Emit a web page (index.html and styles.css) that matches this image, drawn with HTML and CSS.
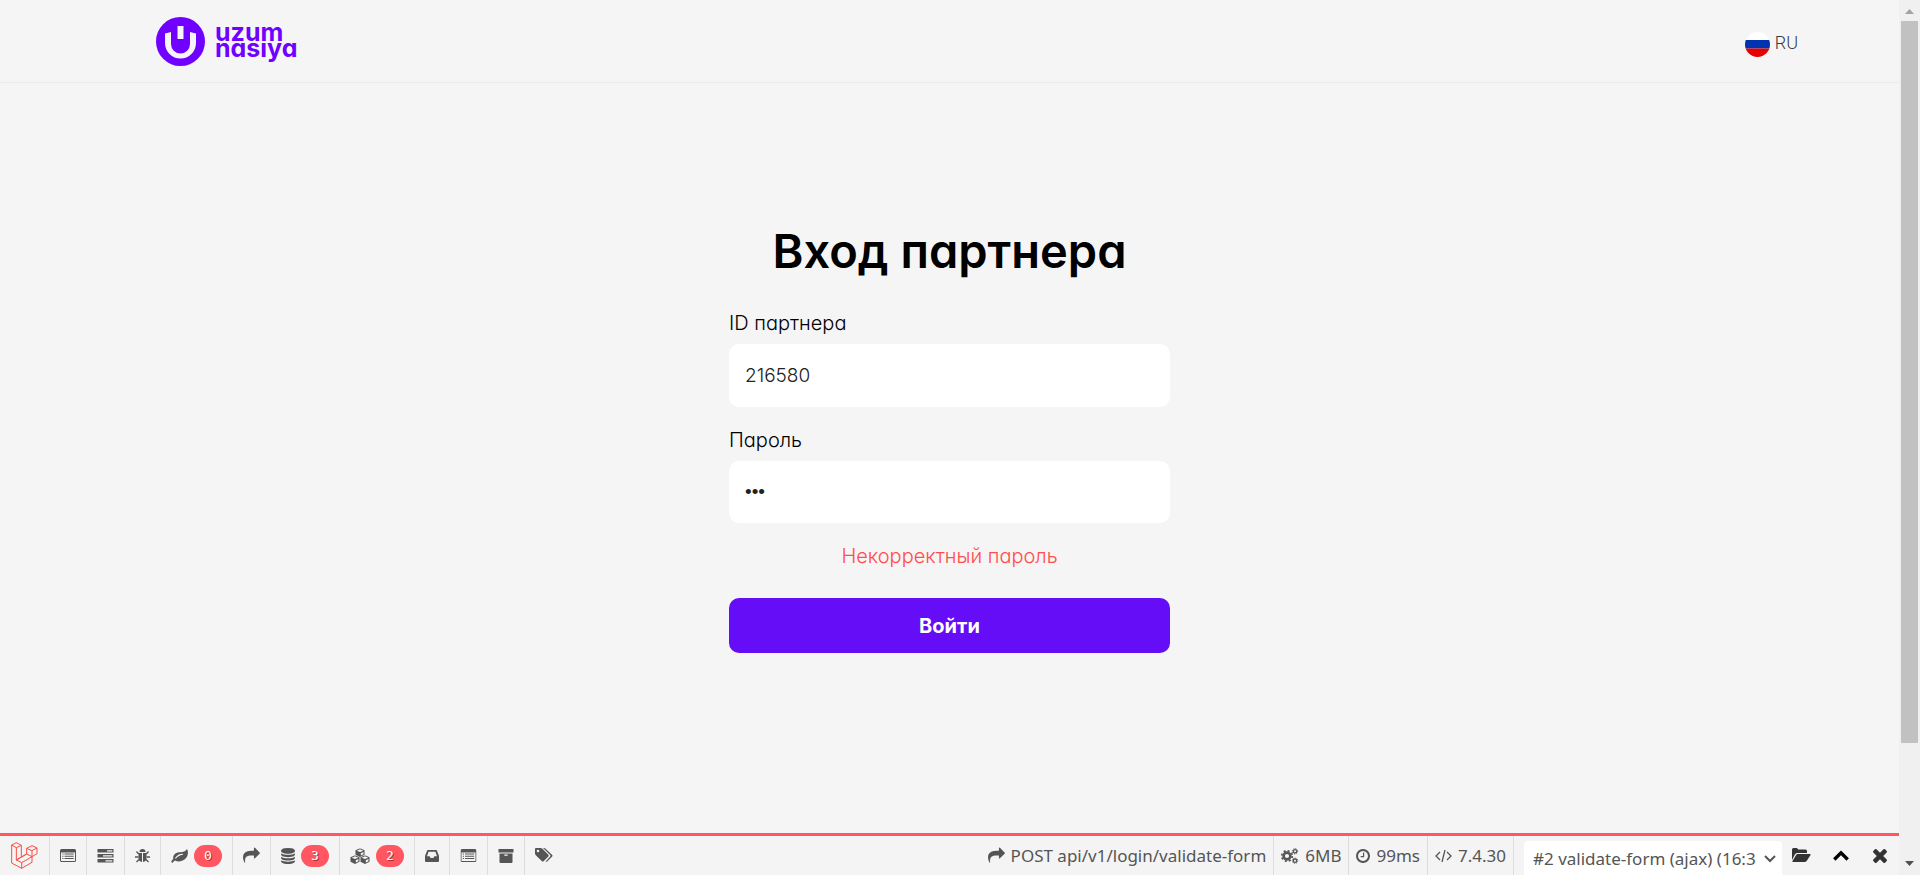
FILE: index.html
```html
<!DOCTYPE html>
<html lang="ru">
<head>
<meta charset="utf-8">
<meta name="viewport" content="width=device-width, initial-scale=1">
<title>Вход партнера</title>
<link rel="stylesheet" href="styles.css">
</head>
<body>
<svg class="sprite" aria-hidden="true">
  <symbol id="share" viewBox="0 0 1792 1792"><path d="M1792 640q0 26-19 45l-512 512q-19 19-45 19t-45-19-19-45V896H928q-98 0-175.500 6t-154 21.500-133 42.500-105.500 69.500-80 101-48.500 138.500-17.500 181q0 55 5 123 0 6 2.500 23.500t2.500 26.500q0 15-8.500 25t-23.500 10q-16 0-28-17-7-9-13-22t-13.500-30-10.500-24Q0 1286 0 1120q0-199 53-333 162-403 875-403h224V128q0-26 19-45t45-19 45 19l512 512q19 19 19 45z"/></symbol>
  <symbol id="list" viewBox="0 0 16 14"><path fill-rule="evenodd" d="M1.500 0h13A1.500 1.500 0 0 1 16 1.500v10a1.500 1.500 0 0 1-1.500 1.500h-13A1.500 1.500 0 0 1 0 11.500v-10A1.500 1.500 0 0 1 1.500 0zM1 3.500v8q0 .5.5.5h13q.5 0 .5-.5v-8zM2.300 4.500h1.200v1H2.300zm2.200 0h9.200v1H4.500zM2.300 6.700h1.200v1H2.300zm2.200 0h9.200v1H4.500zM2.300 9h1.200v1H2.300zm2.200 0h9.200v1H4.500z"/></symbol>
</svg>
<div class="page">
  <header class="header">
    <a class="brand" href="#" aria-label="uzum nasiya">
      <svg class="brand-mark" viewBox="0 0 49 49" aria-hidden="true"><circle cx="24.500" cy="24.500" r="24.500" fill="#7000ff"/><path fill="#f5f5f5" d="M21.500 9h6v13h-6zM9 16.500l6-1.500v12a9.500 9.500 0 0 0 19 0V15l6 1.500V26a15.500 15.500 0 0 1-31 0z"/></svg>
      <span class="brand-name">uzum<br>nasıya</span>
    </a>
    <button class="lang" type="button">
      <svg class="flag" viewBox="0 0 25 25" aria-hidden="true"><clipPath id="disc"><circle cx="12.500" cy="12.500" r="12.500"/></clipPath><g clip-path="url(#disc)"><path fill="#fff" d="M0 0h25v8H0z"/><path fill="#0033b0" d="M0 8h25v8.500H0z"/><path fill="#e80000" d="M0 16.500h25V25H0z"/></g></svg>
      <span>RU</span>
    </button>
  </header>
  <main class="main">
    <form class="login">
      <h1 class="title">Вход партнера</h1>
      <label class="label" for="pid">ID партнера</label>
      <input class="input" id="pid" type="text" value="216580">
      <label class="label" for="pass">Пароль</label>
      <input class="input input-secret" id="pass" type="password" value="123">
      <p class="error">Некорректный пароль</p>
      <button class="submit" type="button">Войти</button>
    </form>
  </main>
  <footer class="debugbar">
    <nav class="tabs">
      <a class="tab tab-logo" href="#" aria-label="Laravel"><svg width="27" height="27" viewBox="32 52 81 81" fill="none" stroke="#ff4a42" stroke-width="3" stroke-linejoin="round"><path d="M34 61l14-7 15 8v35l-15 9V69L34 61v54l30 16 31-18V96l15-9V70l-15-7-16 8v17l-31 18 16 8v17M48 69l15-7M64 114l31-18-16-8M79 71l16 7 15-8M95 78v18M63 97l16-9"/></svg></a>
      <a class="tab" href="#" aria-label="Messages"><svg width="16" height="14"><use href="#list"/></svg></a>
      <a class="tab" href="#" aria-label="Timeline"><svg width="17" height="14" viewBox="0 0 17 14"><path fill-rule="evenodd" d="M.5 0h16v3.600H.5zm9.500 1.200v1.200h5.300V1.200zM.5 5h16v3.600H.5zm5.500 1.200v1.200h9.300V6.200zM.5 10h16v3.600H.5zm8 1.200v1.200h6.800v-1.200z"/></svg></a>
      <a class="tab" href="#" aria-label="Exceptions"><svg width="15" height="16" viewBox="0 0 15 16"><path d="M4.500 4a3 3 0 0 1 6 0zM3.500 5H7v9Q3.500 13.500 3.500 10zM8 5h3.500v5Q11.500 13.500 8 14z"/><path d="M3.700 6L1.500 3.500M3.500 9H0M4 11.500L1.500 14M11.300 6l2.200-2.500M11.500 9H15M11 11.500l2.500 2.500" fill="none" stroke="#555" stroke-width="1.300"/></svg></a>
      <a class="tab" href="#" aria-label="Views"><svg width="17" height="14" viewBox="0 0 17 14"><path fill-rule="evenodd" d="M16 0q1 1.500 1 4-.5 6-6.500 8-3.500 1-6.500-.5-1.500.7-2 2Q1 14 .3 13q-.3-1 1.900-3Q1.500 5 6.500 3.500q2-.5 5-.5Q14.500 2.800 16 0zM12 4.700Q7 4.500 4 9l.8.700Q8 6 12 5.700z"/></svg><span class="badge">0</span></a>
      <a class="tab" href="#" aria-label="Route"><svg width="17" height="17"><use href="#share"/></svg></a>
      <a class="tab" href="#" aria-label="Queries"><svg width="14" height="16" viewBox="128 0 1536 1792"><path d="M896 768q237 0 443-43t325-127v170q0 69-103 128t-280 93.500-385 34.500-385-34.500T231 896 128 768V598q119 84 325 127t443 43zm0 768q237 0 443-43t325-127v170q0 69-103 128t-280 93.500-385 34.500-385-34.500-280-93.500-103-128v-170q119 84 325 127t443 43zm0-384q237 0 443-43t325-127v170q0 69-103 128t-280 93.500-385 34.500-385-34.500-280-93.500-103-128V982q119 84 325 127t443 43zM896 0q208 0 385 34.500t280 93.500 103 128v128q0 69-103 128t-280 93.500T896 640t-385-34.500T231 512 128 384V256q0-69 103-128t280-93.500T896 0z"/></svg><span class="badge">3</span></a>
      <a class="tab" href="#" aria-label="Models"><svg width="20" height="16" viewBox="0 0 20 16"><g id="cube"><path d="M5.500 2.200l3.300-1.500q1.200-.6 2.400 0l3.300 1.500v4.600L10 9 5.500 6.800z"/><path fill="#f4f4f4" d="M6.700 2.700L10 1.300l3.300 1.400L10 4.100zM10.800 5.200l2.600-1.100v2.200l-2.600 1.200z"/></g><use href="#cube" x="-5" y="7"/><use href="#cube" x="5" y="7"/></svg><span class="badge">2</span></a>
      <a class="tab" href="#" aria-label="Mails"><svg width="14" height="12" viewBox="0 0 14 12"><path fill-rule="evenodd" d="M3 0h8q.7 0 1 .7L14 6v5q0 1-1 1H1q-1 0-1-1V6L2 .7Q2.300 0 3 0zm.6 1.700L2 6.200h2.700l.9 1.800h2.800l.9-1.800H12l-1.600-4.500z"/></svg></a>
      <a class="tab" href="#" aria-label="Gate"><svg width="17" height="14" viewBox="0 0 16 14"><use href="#list" width="16" height="14"/></svg></a>
      <a class="tab" href="#" aria-label="Session"><svg width="16" height="14" viewBox="0 0 16 14"><path fill-rule="evenodd" d="M.5 0h15v3.600H.5zM1.500 4.500h13V13q0 1-1 1h-11q-1 0-1-1zM6.300 5.600v1.200h3.400V5.600z"/></svg></a>
      <a class="tab tab-last" href="#" aria-label="Request"><svg width="18" height="15" viewBox="0 0 18 15"><path fill-rule="evenodd" d="M0 1q0-1 1-1h4.800q.8 0 1.600.8l6 6q.8.8 0 1.600L8.600 13.200q-.8.800-1.600 0L.8 7.200Q0 6.400 0 5.600zM3 1.700A1.300 1.300 0 1 0 3 4.300 1.300 1.300 0 1 0 3 1.700z"/><path d="M8 0h1q.8 0 1.600.8l6.600 6.200q.8.800 0 1.600l-5 5q-.8.700-1.500 0l4.500-5q.7-.9 0-1.700z"/></svg></a>
    </nav>
    <div class="stats">
      <span class="stat"><svg width="17" height="17"><use href="#share"/></svg>POST api/v1/login/validate-form</span>
      <span class="stat"><svg width="18" height="16" viewBox="0 0 18 16" fill="none" stroke="#555"><circle cx="6" cy="8" r="3.400" stroke-width="2.600"/><circle cx="6" cy="8" r="5.300" stroke-width="1.600" stroke-dasharray="2.100 2.060"/><circle cx="14" cy="3.300" r="1.700" stroke-width="1.300"/><circle cx="14" cy="3.300" r="2.700" stroke-width="1" stroke-dasharray="1.060"/><circle cx="14" cy="12.700" r="1.700" stroke-width="1.300"/><circle cx="14" cy="12.700" r="2.700" stroke-width="1" stroke-dasharray="1.060"/></svg>6MB</span>
      <span class="stat"><svg width="14" height="14" viewBox="128 128 1536 1536"><path d="M1024 544v448q0 14-9 23t-23 9H672q-14 0-23-9t-9-23v-64q0-14 9-23t23-9h224V544q0-14 9-23t23-9h64q14 0 23 9t9 23zm416 352q0-148-73-273t-198-198-273-73-273 73-198 198-73 273 73 273 198 198 273 73 273-73 198-198 73-273zm224 0q0 209-103 385.500T1281.500 1561 896 1664t-385.500-103T231 1281.500 128 896t103-385.500T510.500 231 896 128t385.500 103T1561 510.500 1664 896z"/></svg>99ms</span>
      <span class="stat"><svg width="17" height="12" viewBox="0 0 17 12" fill="none" stroke="#555" stroke-width="1.300"><path d="M5 2L1 6l4 4M12 2l4 4-4 4M10 0L7 12"/></svg>7.4.30</span>
      <span class="picker">
        <select class="requests" aria-label="Requests"><option>#2 validate-form (ajax) (16:34:12)</option></select>
        <svg class="picker-arrow" width="12" height="8" viewBox="0 0 12 8" fill="none" stroke="#555" stroke-width="2"><path d="M1 1l5 5 5-5"/></svg>
      </span>
      <button class="tool" type="button" aria-label="Open"><svg width="19" height="15" viewBox="0 0 19 15"><path fill="#333" d="M0 12V1.500Q0 0 1.500 0h3Q6 0 6 1.500h7.500Q15 1.500 15 3v2H5.500Q4 5 3 6.200zM5.500 6H18q1.200 0 .5 1L15 12.500Q14 14 12.500 14H1q-1.200 0-.5-1L4 7.200Q4.600 6 5.500 6z"/></svg></button>
      <button class="tool" type="button" aria-label="Minimize"><svg width="16" height="11" viewBox="0 0 16 11"><path fill="none" stroke="#000" stroke-width="3.400" d="M1.300 9.500L8 2.800l6.700 6.700"/></svg></button>
      <button class="tool" type="button" aria-label="Close"><svg width="14" height="14" viewBox="302 366 1188 1188"><path fill="#333" d="M1490 1322q0 40-28 68l-136 136q-28 28-68 28t-68-28l-294-294-294 294q-28 28-68 28t-68-28l-136-136q-28-28-28-68t28-68l294-294-294-294q-28-28-28-68t28-68l136-136q28-28 68-28t68 28l294 294 294-294q28-28 68-28t68 28l136 136q28 28 28 68t-28 68l-294 294 294 294q28 28 28 68z"/></svg></button>
    </div>
  </footer>
</div>
<div class="scrollbar" aria-hidden="true">
  <svg width="21" height="21" viewBox="0 0 21 21"><path fill="#a3a3a3" d="M6 14l4.500-5 4.500 5z"/></svg>
  <div class="track"><div class="thumb"></div></div>
  <svg width="21" height="21" viewBox="0 0 21 21"><path fill="#505050" d="M6 7h9l-4.500 5z"/></svg>
</div>
</body>
</html>
```
FILE: styles.css
```css
* { box-sizing: border-box; }

body {
  margin: 0;
  display: flex;
  min-height: 100vh;
  background: #f5f5f5;
  color: #000;
  font-family: Inter, "Noto Sans", sans-serif;
  font-feature-settings: "cv11";
  font-size: 20px;
  font-weight: 300;
}

input, button, select { font: inherit; font-feature-settings: inherit; color: inherit; border: 0; margin: 0; }
button { background: none; padding: 0; cursor: pointer; }
a { color: inherit; text-decoration: none; }
.sprite { position: absolute; width: 0; height: 0; }

.page { flex: 1; min-width: 0; display: flex; flex-direction: column; }

.header {
  height: 83px;
  padding: 0 101px 0 156px;
  border-bottom: 1px solid #ebebeb;
  display: flex;
  justify-content: space-between;
  align-items: center;
}
.brand { display: flex; align-items: center; gap: 10px; color: #7000ff; }
.brand-mark { width: 49px; height: 49px; }
.brand-name { font-size: 25px; line-height: 16px; font-weight: 700; padding-bottom: 2px; }
.lang { display: flex; align-items: center; gap: 5px; font-family: Roboto, sans-serif; font-size: 18px; color: #343a40; padding-top: 6px; }
.lang span { padding-bottom: 3px; }
.flag { width: 25px; height: 25px; }

.main { flex: 1; padding: 138px 16px 0; }
.login { max-width: 441px; margin: 0 auto; display: flex; flex-direction: column; }
.title { margin: 0 0 28px; font-size: 47px; line-height: 60px; font-weight: 600; text-align: center; white-space: nowrap; }
.label { line-height: 28px; margin-bottom: 7px; }
.input {
  width: 100%;
  height: 63px;
  padding: 0 16px;
  margin-bottom: 19px;
  border-radius: 10px;
  background: #fff;
  color: #222;
  font-size: 19px;
}
.input-secret { height: 62px; font-family: "Liberation Sans", sans-serif; }
.error { margin: 0 0 28px; line-height: 28px; color: #ff4d4d; text-align: center; }
.submit { height: 55px; border-radius: 10px; background: #640df6; color: #fff; font-weight: 700; }

.debugbar {
  height: 42px;
  border-top: 3px solid #ff5661;
  background: #f4f4f4;
  display: flex;
  justify-content: space-between;
  color: #555;
  font-family: "Noto Sans", sans-serif;
  font-size: 17px;
  font-weight: 400;
  white-space: nowrap;
}
.debugbar svg { fill: #555; flex: none; }
.debugbar svg[fill="none"] { fill: none; }
.tabs, .stats { display: flex; }
.tab { display: flex; align-items: center; gap: 6px; padding: 0 10px; border-right: 1px solid #ddd; }
.tab-logo { padding: 0 11px; }
.tab-last { border-right: 0; }
.badge {
  min-width: 28px;
  height: 22px;
  border-radius: 11px;
  background: #ff5661;
  color: #fff;
  font-family: "DejaVu Sans Mono", monospace;
  font-size: 13px;
  line-height: 22px;
  text-align: center;
  text-shadow: 1px 1px 0 #a33;
}
.stat { display: flex; align-items: center; gap: 6px; padding: 0 7px; border-right: 1px solid #ddd; }
.picker { position: relative; display: flex; padding: 5px 0 0 10px; }
.requests {
  width: 258px;
  padding: 0 26px 0 9px;
  border-radius: 4px 4px 0 0;
  background: #fff;
  appearance: none;
}
.picker-arrow { position: absolute; right: 6px; top: 19px; }
.tool { width: 39px; display: flex; align-items: center; justify-content: center; }

.scrollbar { width: 21px; background: #f0f0f0; display: flex; flex-direction: column; }
.track { flex: 1; padding: 0 2px; }
.thumb { height: 722px; max-height: 87%; background: #c1c1c1; }
```
